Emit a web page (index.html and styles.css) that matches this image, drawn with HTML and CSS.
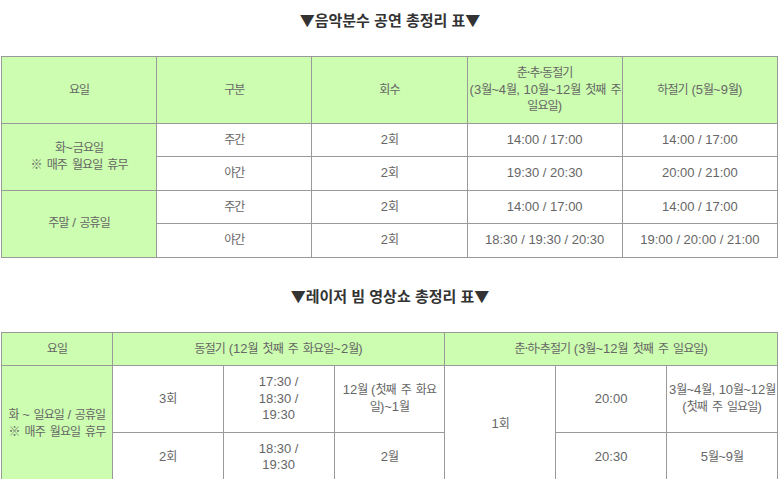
FILE: index.html
```html
<!DOCTYPE html>
<html lang="ko">
<head>
<meta charset="utf-8">
<link rel="stylesheet" href="styles.css">
</head>
<body>
<div class="page">
  <h2 class="title title-first">▼음악분수 공연 총정리 표▼</h2>
  <table class="sched five">
    <colgroup><col><col><col><col><col></colgroup>
    <thead>
      <tr>
        <th><span class="k">요일</span></th>
        <th><span class="k">구분</span></th>
        <th><span class="k">회수</span></th>
        <th><span class="k">춘·추·동절기</span><br>(3<span class="k">월</span>~4<span class="k">월</span>, 10<span class="k">월</span>~12<span class="k">월 첫째 주</span><br><span class="k">일요일</span>)</th>
        <th><span class="k">하절기</span> (5<span class="k">월</span>~9<span class="k">월</span>)</th>
      </tr>
    </thead>
    <tbody>
      <tr>
        <th rowspan="2"><span class="k">화</span>~<span class="k">금요일</span><br><span class="k">※ 매주 월요일 휴무</span></th>
        <td><span class="k">주간</span></td><td>2<span class="k">회</span></td><td>14:00 / 17:00</td><td>14:00 / 17:00</td>
      </tr>
      <tr>
        <td><span class="k">야간</span></td><td>2<span class="k">회</span></td><td>19:30 / 20:30</td><td>20:00 / 21:00</td>
      </tr>
      <tr>
        <th rowspan="2"><span class="k">주말</span> / <span class="k">공휴일</span></th>
        <td><span class="k">주간</span></td><td>2<span class="k">회</span></td><td>14:00 / 17:00</td><td>14:00 / 17:00</td>
      </tr>
      <tr>
        <td><span class="k">야간</span></td><td>2<span class="k">회</span></td><td>18:30 / 19:30 / 20:30</td><td>19:00 / 20:00 / 21:00</td>
      </tr>
    </tbody>
  </table>

  <h2 class="title">▼레이저 빔 영상쇼 총정리 표▼</h2>
  <table class="sched seven">
    <colgroup><col><col><col><col><col><col><col></colgroup>
    <thead>
      <tr>
        <th><span class="k">요일</span></th>
        <th colspan="3"><span class="k">동절기</span> (12<span class="k">월 첫째 주 화요일</span>~2<span class="k">월</span>)</th>
        <th colspan="3"><span class="k">춘·하·추절기</span> (3<span class="k">월</span>~12<span class="k">월 첫째 주 일요일</span>)</th>
      </tr>
    </thead>
    <tbody>
      <tr>
        <th rowspan="2"><span class="k">화</span> ~ <span class="k">일요일</span> / <span class="k">공휴일</span><br><span class="k">※ 매주 월요일 휴무</span></th>
        <td>3<span class="k">회</span></td>
        <td>17:30 /<br>18:30 /<br>19:30</td>
        <td>12<span class="k">월</span> (<span class="k">첫째 주 화요</span><br><span class="k">일</span>)~1<span class="k">월</span></td>
        <td rowspan="2">1<span class="k">회</span></td>
        <td>20:00</td>
        <td>3<span class="k">월</span>~4<span class="k">월</span>, 10<span class="k">월</span>~12<span class="k">월</span><br>(<span class="k">첫째 주 일요일</span>)</td>
      </tr>
      <tr>
        <td>2<span class="k">회</span></td>
        <td>18:30 /<br>19:30</td>
        <td>2<span class="k">월</span></td>
        <td>20:30</td>
        <td>5<span class="k">월</span>~9<span class="k">월</span></td>
      </tr>
    </tbody>
  </table>
</div>
</body>
</html>
```

FILE: styles.css
```css
html, body {
  margin: 0;
  padding: 0;
  background: #ffffff;
}

body {
  font-family: "Liberation Sans", "Noto Sans CJK KR", sans-serif;
  color: #666666;
}

.page {
  padding: 0 0 0 1px;
}

.title {
  margin: 28px 0 26px;
  font-family: "Noto Sans CJK KR", sans-serif;
  font-size: 15px;
  line-height: 20px;
  font-weight: bold;
  color: #333333;
  text-align: center;
}

.title-first {
  margin-top: 10px;
}

.sched {
  width: 777px;
  border-collapse: collapse;
  table-layout: fixed;
  font-size: 13px;
  line-height: 16.5px;
}

.sched th,
.sched td {
  border: 1px solid #999999;
  padding: 8px 2px;
  text-align: center;
  vertical-align: middle;
  font-weight: normal;
  white-space: nowrap;
  color: #666666;
}

.sched th {
  background: #ccfdb0;
}

.sched td {
  background: #ffffff;
}

.k {
  font-family: "Noto Sans CJK KR", sans-serif;
  font-size: 12px;
  line-height: 12px;
  letter-spacing: -0.9px;
  word-spacing: 2.5px;
}
```
